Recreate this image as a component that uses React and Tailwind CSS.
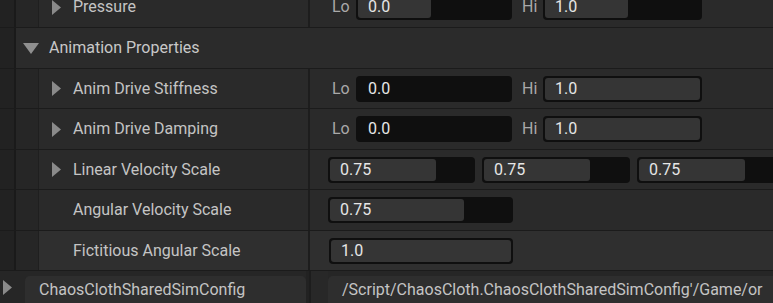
const font = { fontFamily: "Roboto, 'Noto Sans', sans-serif" }

function Arrow({ down = false, className = "" }) {
  if (down) {
    return (
      <svg width="16" height="11" viewBox="0 0 16 11" className={className}>
        <path d="M0 0 L16 0 L8 11 Z" fill="#8f8f8f" />
      </svg>
    )
  }
  return (
    <svg width="9" height="15" viewBox="0 0 9 15" className={className}>
      <path d="M0 0 L9 7.5 L0 15 Z" fill="#8a8a8a" />
    </svg>
  )
}

function SliderBox({ value, fill, className }) {
  return (
    <div className={"relative h-[26px] rounded-[4px] bg-[#0f0f0f] p-[2px] " + className}>
      <div className="h-full rounded-[3px] bg-[#353535]" style={{ width: fill }} />
      <div className="absolute inset-0 flex items-center pl-[12px] text-[16px] text-[#e6e6e6]">{value}</div>
    </div>
  )
}

function Gutter({ indent = true }) {
  return (
    <>
      <div className="w-[14px] shrink-0 bg-[#222222]" />
      <div className="w-[2px] shrink-0 bg-[#1a1a1a]" />
      {indent && <div className="w-[23px] shrink-0 bg-[#262626] border-r border-[#1f1f1f]" />}
    </>
  )
}

function PropRow({ label, arrow = true, height, bg = "bg-[#2a2a2a]", children }) {
  return (
    <div className={"flex shrink-0 border-b border-[#1b1b1b] " + height}>
      <Gutter />
      <div className={"flex w-[269px] shrink-0 items-center " + bg}>
        <div className="flex w-[34px] justify-center pl-[1px]">{arrow && <Arrow />}</div>
        <span className="text-[16px] text-[#c4c4c4]">{label}</span>
      </div>
      <div className="w-[2px] shrink-0 bg-[#1d1d1d]" />
      <div className={"flex flex-1 items-center overflow-hidden " + bg}>{children}</div>
    </div>
  )
}

function LoHi({ lo, loFill, hi, hiFill }) {
  return (
    <div className="flex items-center pl-[22px]">
      <span className="w-[24px] text-[16px] text-[#a9a9a9]">Lo</span>
      <SliderBox value={lo} fill={loFill} className="w-[156px]" />
      <span className="ml-[10px] w-[21px] text-[16px] text-[#a9a9a9]">Hi</span>
      <SliderBox value={hi} fill={hiFill} className="w-[159px]" />
    </div>
  )
}

export default function App() {
  return (
    <div className="flex h-[303px] w-[773px] flex-col overflow-hidden bg-[#1c1c1c]" style={font}>
      <PropRow label="Pressure" height="h-[41px] -mt-[13px]">
        <LoHi lo="0.0" loFill="73px" hi="1.0" hiFill="83px" />
      </PropRow>

      <div className="flex h-[41px] shrink-0 border-b border-[#1b1b1b]">
        <Gutter indent={false} />
        <div className="flex flex-1 items-center bg-[#2b2b2b]">
          <Arrow down className="ml-[7px] mr-[10px]" />
          <span className="text-[16px] text-[#c8c8c8]">Animation Properties</span>
        </div>
      </div>

      <PropRow label="Anim Drive Stiffness" height="h-[40px]">
        <LoHi lo="0.0" loFill="0px" hi="1.0" hiFill="100%" />
      </PropRow>
      <PropRow label="Anim Drive Damping" height="h-[41px]">
        <LoHi lo="0.0" loFill="0px" hi="1.0" hiFill="100%" />
      </PropRow>
      <PropRow label="Linear Velocity Scale" height="h-[40px]">
        <div className="flex gap-[7px] pl-[18px]">
          <SliderBox value="0.75" fill="106px" className="w-[147px] shrink-0" />
          <SliderBox value="0.75" fill="106px" className="w-[148px] shrink-0" />
          <SliderBox value="0.75" fill="106px" className="w-[147px] shrink-0" />
        </div>
      </PropRow>
      <PropRow label="Angular Velocity Scale" arrow={false} height="h-[41px]">
        <div className="pl-[18px]">
          <SliderBox value="0.75" fill="134px" className="w-[185px]" />
        </div>
      </PropRow>
      <PropRow label="Fictitious Angular Scale" arrow={false} height="h-[40px]" bg="bg-[#2f2f2f]">
        <div className="pl-[19px]">
          <SliderBox value="1.0" fill="100%" className="w-[184px]" />
        </div>
      </PropRow>

      <div className="flex flex-1 bg-[#262626]">
        <div className="flex w-[25px] shrink-0 items-center pl-[3px]">
          <Arrow />
        </div>
        <div className="mt-[5px] flex w-[281px] shrink-0 items-center rounded-t-[5px] bg-[#2e2e2e] pl-[14px]">
          <span className="text-[16px] text-[#c4c4c4]">ChaosClothSharedSimConfig</span>
        </div>
        <div className="w-[3px] shrink-0 bg-[#222222]" />
        <div className="w-[2px] shrink-0 bg-[#1d1d1d]" />
        <div className="w-[17px] shrink-0 bg-[#282828]" />
        <div className="mt-[5px] flex flex-1 items-center overflow-hidden whitespace-nowrap rounded-tl-[5px] bg-[#2e2e2e] pl-[14px]">
          <span className="text-[16px] text-[#c4c4c4]">/Script/ChaosCloth.ChaosClothSharedSimConfig'/Game/or</span>
        </div>
      </div>
    </div>
  )
}
